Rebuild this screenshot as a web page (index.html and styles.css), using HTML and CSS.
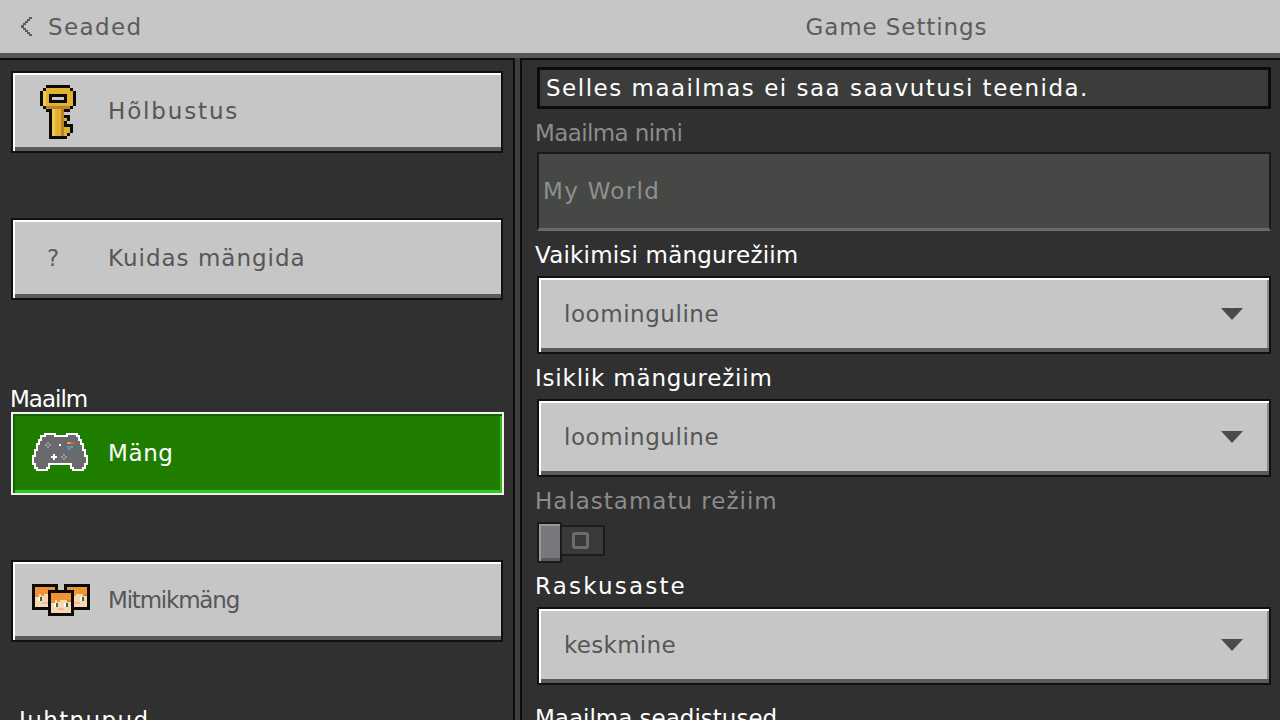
FILE: index.html
```html
<!DOCTYPE html>
<html lang="et">
<head>
<meta charset="utf-8">
<title>Game Settings</title>
<link rel="stylesheet" href="styles.css">
</head>
<body>
<svg class="defs" width="0" height="0" aria-hidden="true">
  <symbol id="face" viewBox="0 0 26 26" shape-rendering="crispEdges">
    <rect width="26" height="26" fill="#0c0a08"/>
    <rect x="3" y="3" width="20" height="20" fill="#f8d8b4"/>
    <rect x="3" y="3" width="20" height="7" fill="#ef9334"/>
    <rect x="3" y="10" width="4" height="3" fill="#ef9334"/>
    <rect x="9" y="10" width="3" height="2" fill="#ef9334"/>
    <rect x="19" y="10" width="4" height="2" fill="#d98228"/>
    <rect x="6" y="13" width="4" height="4" fill="#fff"/>
    <rect x="8" y="13" width="2" height="4" fill="#3d6b3a"/>
    <rect x="16" y="13" width="4" height="4" fill="#fff"/>
    <rect x="18" y="13" width="2" height="4" fill="#3d6b3a"/>
    <rect x="10" y="18" width="6" height="2" fill="#f0b8a0"/>
  </symbol>
</svg>
<div class="app">
  <header class="top">
    <div class="top-left">
      <svg class="chev" width="14" height="20" viewBox="0 0 14 20" shape-rendering="crispEdges"><path d="M9 0h3v2H9zM7 2h3v2H7zM5 4h3v2H5zM3 6h3v2H3zM1 8h3v3H1zM3 11h3v2H3zM5 13h3v2H5zM7 15h3v2H7zM9 17h3v2H9z" fill="#5b5b5b"/></svg>
      <span class="top-text">Seaded</span>
    </div>
    <div class="top-title">Game Settings</div>
  </header>
  <div class="body">
    <aside class="side">
      <button class="btn after-gap">
        <span class="ico ico-key">
          <svg width="36" height="54" viewBox="0 0 12 18" shape-rendering="crispEdges">
            <path d="M2 0h8v1h1v1h1v5h-1v1h-1v1H8v1h2v2H9v1h2v3h-1v1H9v1H3V9H2V8H1V7H0V2h1V1h1z" fill="#0d0b05"/>
            <path d="M2 1h8v1h1v5h-1v1H8v3h1v1H8v2h2v2H9v1H4V8H2V7H1V2h1z" fill="#e2b232"/>
            <path d="M4 8h1v9H4zM1 2h1v5H1z" fill="#f0cb50"/>
            <path d="M7 8h1v9H7zM2 7h8v1H2z" fill="#b8842a"/>
            <path d="M3 3h6v3H3z" fill="#0d0b05"/>
            <path d="M4 4h4v1H4z" fill="#c9c9c9"/>
          </svg>
        </span>
        <span class="btn-text sp-holbustus">Hõlbustus</span>
      </button>
      <button class="btn">
        <span class="ico ico-q">?</span>
        <span class="btn-text sp-kuidas">Kuidas mängida</span>
      </button>
      <h2 class="side-head head-world">Maailm</h2>
      <button class="btn sel after-gap">
        <span class="ico">
          <svg width="58" height="40" viewBox="-0.5 -0.5 29 20">
            <path d="M6 0h5v1h6V0h5v1h1v2h1v2h1v3h1v3h1v4h-1v2h-1v1h-5v-1h-1v-2H8v2H7v1H2v-1H1v-2H0v-4h1V8h1V5h1V3h1V1h2z" fill="#6a696d" stroke="#fff" stroke-width="1"/>
            <g shape-rendering="crispEdges">
              <path d="M7 4h1v1H7zM6 5h1v1H6zM8 5h1v1H8zM7 6h1v1H7z" fill="#9b9a9e"/>
              <path d="M13 5h1v1h-1z" fill="#fff"/>
              <path d="M17 4h2v1h-2z" fill="#d8a84a"/>
              <path d="M19 4h2v1h-2z" fill="#d8504a"/>
              <path d="M17 6h2v2h-2z" fill="#4f8fc8"/>
              <path d="M19 6h1v1h-1z" fill="#6fae5a"/>
              <path d="M10 10h1v1h1v1h-1v1h-1v-1H9v-1h1z" fill="#fff"/>
              <path d="M15 10h1v1h-1zM14 11h1v1h-1zM16 11h1v1h-1zM15 12h1v1h-1z" fill="#9b9a9e"/>
            </g>
          </svg>
        </span>
        <span class="btn-text sp-mang">Mäng</span>
      </button>
      <button class="btn">
        <span class="ico">
          <svg class="faces" width="58" height="32" viewBox="0 0 58 32">
            <use href="#face" x="0" y="0" width="26" height="26"/>
            <use href="#face" x="32" y="0" width="26" height="26"/>
            <use href="#face" x="16" y="6" width="26" height="26"/>
          </svg>
        </span>
        <span class="btn-text sp-mitmik">Mitmikmäng</span>
      </button>
      <h2 class="side-head head-controls">Juhtnupud</h2>
    </aside>
    <main class="main">
      <div class="notice">Selles maailmas ei saa saavutusi teenida.</div>
      <label class="lab dim lab-name">Maailma nimi</label>
      <div class="input">My World</div>
      <label class="lab sp-vaikimisi">Vaikimisi mängurežiim</label>
      <div class="select"><span class="sp-loom">loominguline</span><svg class="arrow" width="22" height="12" viewBox="0 0 22 12"><path d="M0 0h22L11 12z" fill="#4a4a4a"/></svg></div>
      <label class="lab sp-isiklik">Isiklik mängurežiim</label>
      <div class="select"><span class="sp-loom">loominguline</span><svg class="arrow" width="22" height="12" viewBox="0 0 22 12"><path d="M0 0h22L11 12z" fill="#4a4a4a"/></svg></div>
      <label class="lab dim">Halastamatu režiim</label>
      <div class="toggle"><span class="thumb"></span><span class="track"><span class="ring"></span></span></div>
      <label class="lab sp-raskus">Raskusaste</label>
      <div class="select select-last"><span class="sp-kesk">keskmine</span><svg class="arrow" width="22" height="12" viewBox="0 0 22 12"><path d="M0 0h22L11 12z" fill="#4a4a4a"/></svg></div>
      <label class="lab sp-seadistused">Maailma seadistused</label>
    </main>
  </div>
</div>
</body>
</html>
```
FILE: styles.css
```css
* { box-sizing: border-box; }
html, body { margin: 0; height: 100%; }
body { overflow: hidden; background: #303030; font-family: "DejaVu Sans", sans-serif; font-size: 23px; }
.defs { position: absolute; }
.app { width: 1280px; height: 720px; display: flex; flex-direction: column; overflow: hidden; }

.top { height: 58px; flex: none; display: grid; grid-template-columns: 513px 1fr; align-items: center; background: #c6c6c6; border-bottom: 5px solid #58555a; color: #5b5b5b; }
.top-left { display: flex; align-items: center; padding-left: 20px; gap: 14px; }
.top-text { letter-spacing: 1.4px; }
.top-title { text-align: center; letter-spacing: 0.9px; }

.body { flex: 1; display: grid; grid-template-columns: 515px 1fr; column-gap: 5px; min-height: 0; background: #3e3e3e; }
.side { padding: 11px 0 0 11px; background: #303030; border-top: 2px solid #0c0c0c; border-right: 2px solid #0c0c0c; overflow: hidden; }

.btn { display: flex; align-items: center; width: 492px; height: 82px; padding: 0 0 2px; background: #c6c6c6; border: 2px solid #111; box-shadow: inset 2px 2px 0 #fff, inset 0 -4px 0 #5a5a5c; color: #565656; font: inherit; text-align: left; }
.after-gap { margin-bottom: 65px; }
.ico { width: 95px; display: flex; justify-content: center; align-items: center; flex: none; }
.ico-key { padding: 2px 5px 0 0; }
.ico-q { padding-right: 15px; color: #5b5b5b; }
.btn-text { letter-spacing: 1.3px; }
.sp-holbustus { letter-spacing: 1.85px; }
.sp-kuidas { letter-spacing: 1px; }
.sp-mang { letter-spacing: 0.6px; }
.sp-mitmik { letter-spacing: -1.2px; }
.sel { width: 493px; height: 83px; background: #1f7d00; border-color: #f2f2f2; box-shadow: inset 0 2px 0 #136400, inset 2px 0 0 #136400, inset -2px 0 0 #38b81c, inset 0 -3px 0 #38c81c; color: #fff; }

.side-head { margin: 0; font: inherit; color: #fff; height: 24px; line-height: 24px; }
.head-world { margin: 87px 0 1px -1px; letter-spacing: -1px; }
.head-controls { margin: 66px 0 0 8px; letter-spacing: 1.4px; }

.main { padding: 7px 9px 0 15px; background: #303030; border-top: 2px solid #0c0c0c; border-left: 2px solid #0c0c0c; overflow: hidden; }
.notice { height: 42px; background: #3a3d3a; border: 3px solid #0c0c0c; color: #fff; display: flex; align-items: center; padding-left: 6px; letter-spacing: 1.5px; margin-bottom: 12px; white-space: nowrap; }
.lab { display: block; height: 24px; line-height: 24px; margin-left: -2px; color: #fff; letter-spacing: 1px; white-space: nowrap; margin-bottom: 9px; }
.dim { color: #8c8b8d; }
.lab-name { margin-bottom: 7px; letter-spacing: -0.6px; }
.sp-vaikimisi { letter-spacing: 0.2px; }
.sp-isiklik { letter-spacing: 0.8px; }
.sp-raskus { letter-spacing: 2.2px; }
.sp-seadistused { letter-spacing: 0; }
.input { height: 79px; background: #464846; border: 2px solid #1a1a1a; border-bottom: 3px solid #6a6a6a; color: #8f8f8f; display: flex; align-items: center; padding-left: 4px; letter-spacing: 1.3px; margin-bottom: 12px; }
.select { height: 78px; background: #c6c6c6; border: 2px solid #111; box-shadow: inset 2px 2px 0 #fff, inset 0 -4px 0 #5a5a5c, inset -2px 0 0 #8a8a8a; color: #565656; display: flex; align-items: center; justify-content: space-between; padding: 0 26px 2px 25px; margin-bottom: 12px; }
.sp-loom { letter-spacing: 0.55px; }
.sp-kesk { letter-spacing: 0.3px; }
.select-last { margin-bottom: 21px; }
.arrow { display: block; }
.toggle { height: 41px; width: 68px; display: flex; align-items: center; margin-bottom: 11px; }
.thumb { width: 25px; height: 41px; flex: none; background: #79777b; border: 2px solid #1a1a1a; box-shadow: inset 2px 2px 0 #9a989c, inset 0 -3px 0 #5c5a5e; }
.track { flex: 1; height: 31px; margin-top: -5px; padding-right: 4px; background: #3a3a3a; border: 2px solid #1c1c1c; border-left: 0; display: flex; align-items: center; justify-content: center; }
.ring { width: 17px; height: 17px; border: 3px solid #6c6c6c; border-radius: 3px; }
```
